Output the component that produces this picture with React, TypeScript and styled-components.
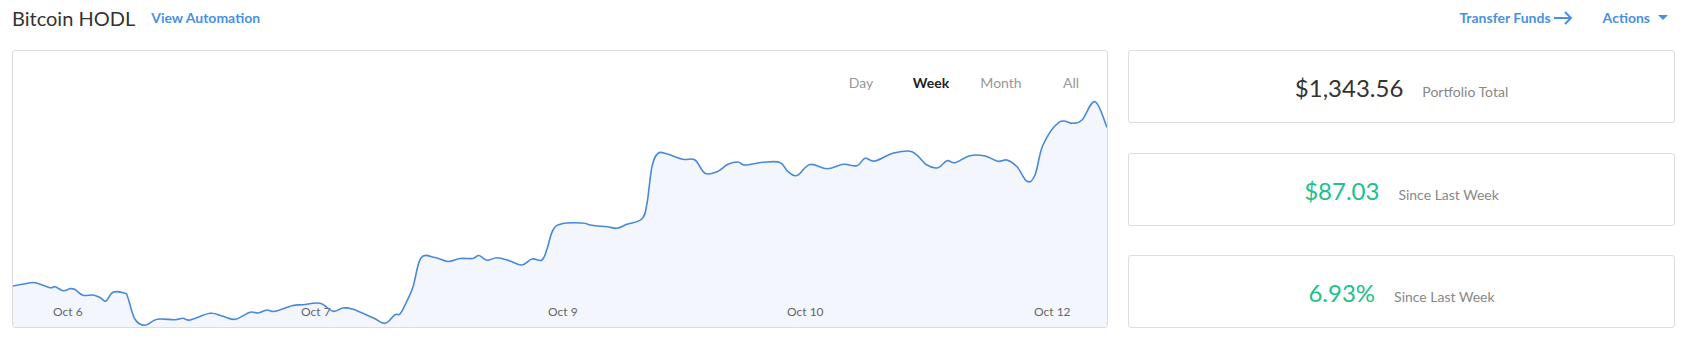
import React, { useState } from 'react';
import styled, { createGlobalStyle } from 'styled-components';

const GlobalStyle = createGlobalStyle`
  body {
    margin: 0;
    background: #fff;
    font-family: Lato, 'Open Sans', sans-serif;
    color: #333;
  }
`;

const Page = styled.div`
  width: 1685px;
  height: 338px;
  box-sizing: border-box;
`;

const Header = styled.header`
  display: flex;
  align-items: center;
  justify-content: space-between;
  height: 35px;
  padding: 0 17px 0 12px;
`;

const TitleGroup = styled.div`
  display: flex;
  align-items: center;
  gap: 16px;
`;

const Title = styled.h1`
  margin: 0;
  font-size: 20px;
  font-weight: 400;
  color: #333;
`;

const LinkButton = styled.a<{ $gap?: number }>`
  display: inline-flex;
  align-items: center;
  gap: ${(p) => p.$gap ?? 0}px;
  font-size: 14px;
  font-weight: 700;
  color: #4a90e2;
  text-decoration: none;
  cursor: pointer;
`;

const HeaderActions = styled.div`
  display: flex;
  align-items: center;
  gap: 30px;
`;

const Main = styled.main`
  display: grid;
  grid-template-columns: 1096px 547px;
  gap: 20px;
  margin-top: 15px;
  padding-left: 12px;
`;

const ChartCard = styled.section`
  display: flex;
  flex-direction: column;
  height: 278px;
  box-sizing: border-box;
  border: 1px solid #ddd;
  border-radius: 3px;
  padding-top: 22px;
  overflow: hidden;
`;

const TabRow = styled.div`
  display: flex;
  justify-content: flex-end;
  height: 20px;
  padding-right: 1px;
`;

const Tab = styled.button<{ $active?: boolean }>`
  width: 70px;
  padding: 0;
  border: none;
  background: none;
  font-family: inherit;
  font-size: 14px;
  line-height: 20px;
  font-weight: ${(p) => (p.$active ? 700 : 400)};
  color: ${(p) => (p.$active ? '#222' : '#999')};
  cursor: pointer;
`;

const ChartSvg = styled.svg`
  display: block;
  width: 1094px;
  height: 234px;
`;

const AxisLabel = styled.text`
  font-family: Lato, sans-serif;
  font-size: 12px;
  fill: #666;
`;

const StatColumn = styled.div`
  display: flex;
  flex-direction: column;
  justify-content: space-between;
  height: 278px;
`;

const StatCard = styled.div`
  display: flex;
  align-items: baseline;
  justify-content: center;
  gap: 19px;
  height: 73px;
  box-sizing: border-box;
  padding-top: 22px;
  border: 1px solid #ddd;
  border-radius: 3px;
`;

const StatValue = styled.span<{ $positive?: boolean }>`
  font-size: 24px;
  color: ${(p) => (p.$positive ? '#22c08a' : '#333')};
`;

const StatLabel = styled.span`
  font-size: 14px;
  color: #888;
`;

// sampled from the week view, in page pixels
const points: [number, number][] = [
  [13, 286], [24, 284], [35, 282.7], [50, 287.7], [55, 286.7], [63, 290.7], [70, 288.7],
  [75, 289.5], [83, 295.3], [93, 295], [100, 297.5], [106, 301], [113, 292.3], [125, 293.3],
  [128, 298], [135, 319.3], [145, 325.3], [157, 319.3], [175, 319.7], [183, 318.3], [190, 320],
  [210, 313.3], [222, 316], [235, 319.3], [250, 312.3], [258, 313], [267, 310], [275, 311.3],
  [292, 305.7], [303, 304.7], [320, 303.3], [333, 311.3], [343, 308], [353, 309.3], [373, 317.7],
  [385, 323.3], [395, 314.7], [400, 314], [406, 303], [413, 287], [421, 258], [435, 257.5],
  [448, 261.5], [460, 258.5], [473, 258.5], [479, 255.5], [487, 260.3], [497, 257.7], [510, 261],
  [522, 265], [532, 259], [542, 260], [547, 249], [553, 230], [562, 223.7], [582, 223],
  [592, 225.3], [607, 226.7], [617, 228.3], [627, 224.3], [642, 218.7], [647, 203.3],
  [652, 166.7], [658, 153.3], [667, 154], [683, 159.3], [695, 160], [705, 173.3], [717, 171.7],
  [728, 164.3], [738, 162], [745, 165], [763, 162.3], [780, 162.5], [788, 171.7], [797, 175.5],
  [810, 164.5], [827, 168.8], [843, 164.3], [857, 165.7], [865, 158.3], [875, 161], [893, 153.3],
  [912, 151.7], [927, 165], [938, 167.7], [947, 160.7], [955, 162.7], [970, 155.7], [985, 156],
  [998, 161.3], [1007, 160], [1017, 166.7], [1027, 181.3], [1035, 175], [1043, 145],
  [1059, 122.3], [1073, 123.3], [1082, 120], [1095, 101.7], [1107, 127.3],
];

function smoothPath(pts: [number, number][]) {
  let d = `M${pts[0][0]},${pts[0][1]}`;
  for (let i = 0; i < pts.length - 1; i++) {
    const p0 = pts[i - 1] || pts[i];
    const p1 = pts[i];
    const p2 = pts[i + 1];
    const p3 = pts[i + 2] || p2;
    const t = 0.18;
    const c1x = p1[0] + (p2[0] - p0[0]) * t;
    const c1y = p1[1] + (p2[1] - p0[1]) * t;
    const c2x = p2[0] - (p3[0] - p1[0]) * t;
    const c2y = p2[1] - (p3[1] - p1[1]) * t;
    d += ` C${c1x.toFixed(1)},${c1y.toFixed(1)} ${c2x.toFixed(1)},${c2y.toFixed(1)} ${p2[0]},${p2[1]}`;
  }
  return d;
}

const labels = [
  { x: 53, text: 'Oct 6' },
  { x: 301, text: 'Oct 7' },
  { x: 548, text: 'Oct 9' },
  { x: 787, text: 'Oct 10' },
  { x: 1034, text: 'Oct 12' },
];

const ranges = ['Day', 'Week', 'Month', 'All'];

function PriceChart() {
  const line = smoothPath(points);
  const area = `${line} L1107,327 L13,327 Z`;
  return (
    <ChartSvg viewBox="13 93 1094 234">
      <path d={area} fill="#f3f7fd" />
      {labels.map((l) => (
        <AxisLabel key={l.text} x={l.x} y={316}>
          {l.text}
        </AxisLabel>
      ))}
      <path d={line} fill="none" stroke="#4a88d8" strokeWidth={1.6} strokeLinejoin="round" />
    </ChartSvg>
  );
}

export default function App() {
  const [range, setRange] = useState('Week');

  return (
    <Page>
      <GlobalStyle />
      <Header>
        <TitleGroup>
          <Title>Bitcoin HODL</Title>
          <LinkButton>View Automation</LinkButton>
        </TitleGroup>
        <HeaderActions>
          <LinkButton $gap={2}>
            Transfer Funds
            <svg width="20" height="14" viewBox="0 0 20 14" fill="none">
              <path d="M1 7h17M12 1l6 6-6 6" stroke="#4a90e2" strokeWidth="2" />
            </svg>
          </LinkButton>
          <LinkButton $gap={8}>
            Actions
            <svg width="10" height="5" viewBox="0 0 10 5">
              <path d="M0 0h10L5 5z" fill="#4a90e2" />
            </svg>
          </LinkButton>
        </HeaderActions>
      </Header>
      <Main>
        <ChartCard>
          <TabRow>
            {ranges.map((r) => (
              <Tab key={r} $active={r === range} onClick={() => setRange(r)}>
                {r}
              </Tab>
            ))}
          </TabRow>
          <PriceChart />
        </ChartCard>
        <StatColumn>
          <StatCard>
            <StatValue>$1,343.56</StatValue>
            <StatLabel>Portfolio Total</StatLabel>
          </StatCard>
          <StatCard>
            <StatValue $positive>$87.03</StatValue>
            <StatLabel>Since Last Week</StatLabel>
          </StatCard>
          <StatCard>
            <StatValue $positive>6.93%</StatValue>
            <StatLabel>Since Last Week</StatLabel>
          </StatCard>
        </StatColumn>
      </Main>
    </Page>
  );
}
